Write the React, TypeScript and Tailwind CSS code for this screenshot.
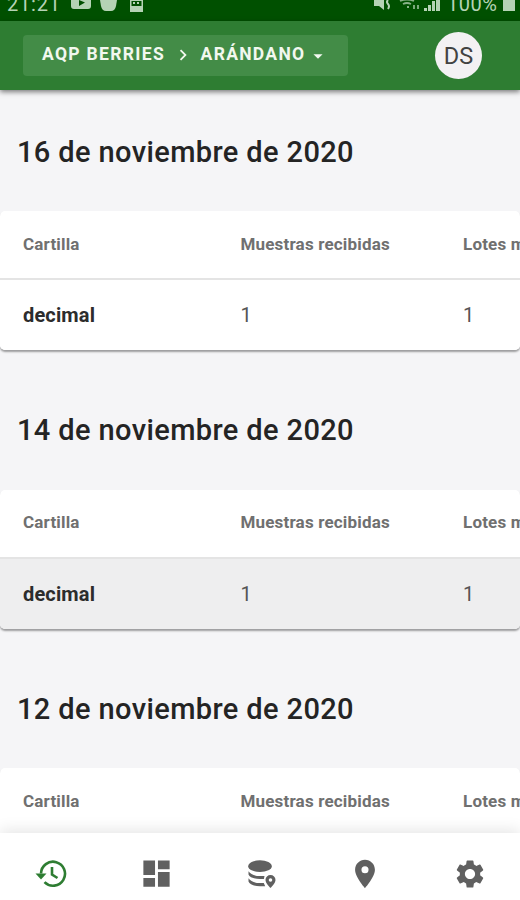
import React, { useState } from 'react';
import { MdDashboard, MdPlace, MdSettings, MdChevronRight, MdArrowDropDown } from 'react-icons/md';

interface CartillaRow {
  name: string;
  samples: number;
  lots: number;
  highlighted?: boolean;
}

interface HistoryDay {
  date: string;
  rows: CartillaRow[];
}

const HISTORY: HistoryDay[] = [
  { date: '16 de noviembre de 2020', rows: [{ name: 'decimal', samples: 1, lots: 1 }] },
  { date: '14 de noviembre de 2020', rows: [{ name: 'decimal', samples: 1, lots: 1, highlighted: true }] },
  { date: '12 de noviembre de 2020', rows: [{ name: 'decimal', samples: 1, lots: 1 }] },
];

const HistoryIcon: React.FC = () => (
  <svg viewBox="0 0 32 28" className="w-8 h-7 mr-[3px]" fill="none" stroke="currentColor" strokeWidth="2.6">
    <path d="M6 13.5A12 12 0 1 1 9.5 22.2" />
    <path d="M17 7v7.5l5.5 3.5" />
    <path d="M0.5 13.5h11L6 19.5z" fill="currentColor" stroke="none" />
  </svg>
);

const DatabasePinIcon: React.FC = () => (
  <svg viewBox="0 0 28 28" className="w-7 h-7 ml-[3px]" fill="currentColor">
    <ellipse cx="12" cy="6.2" rx="11.8" ry="5.9" />
    <path d="M0.5 11.3C2.5 14.5 7 16 12 16h4.500l-.6 3H12C6 19 1.500 17.300 0.500 14.500z" />
    <path d="M0.5 18.3C2.5 21.5 7 23 12 23h3.800l1.400 3.200H12C6 26.200 1.500 24.300 0.500 21.500z" />
    <path
      fillRule="evenodd"
      d="M22.5 15a5 5 0 0 0-5 5c0 3.400 5 8 5 8s5-4.600 5-8a5 5 0 0 0-5-5zm0 3.200a1.800 1.800 0 1 1 0 3.600 1.800 1.800 0 0 1 0-3.600z"
    />
  </svg>
);

const StatusBar: React.FC = () => (
  <div className="h-[21px] shrink-0 bg-[#005000] text-[#b5d3b5] overflow-hidden flex justify-between pl-[7px] pr-[5px]">
    <div className="flex">
      <span className="w-[52px] text-[20px] leading-[22px] -mt-[7px] tracking-[0.8px]">21:21</span>
      <svg viewBox="0 0 73 14" className="w-[73px] h-3.5 ml-3" fill="currentColor">
        <path fillRule="evenodd" d="M0 0h20v6q0 3-3 3H3Q0 9 0 6zm8 0v6l6-3.5z" />
        <path d="M29 0h17l-1 6q-1 5-5 5h-5q-4 0-5-5z" />
        <path fillRule="evenodd" d="M59 0h13v12H59zm1.5 1v5h10V1zM62 2h2v2h-2zm4 0h2v2h-2z" />
      </svg>
    </div>
    <div className="flex">
      <svg viewBox="0 0 68 14" className="w-[68px] h-3.5" fill="currentColor">
        <path d="M0 0h10v10L5 6H0z" />
        <path d="M14 0q-2 2 0 4t0 5" fill="none" stroke="currentColor" strokeWidth="2" />
        <path d="M26 1q7-3 14 0M29 4q4-2 8 0M33 7h2M40 5v4M44 5v4" fill="none" stroke="currentColor" strokeWidth="1.8" opacity="0.75" />
        <path d="M50 8h3v3h-3zM54 5h3v6h-3zM58 1h3v10h-3zM62 0h4v11h-4z" />
      </svg>
      <span className="ml-[5px] w-[52px] text-[20px] leading-[22px] -mt-[7px] tracking-[0.5px]">100%</span>
      <div className="w-3 h-[11px] ml-1 bg-current" />
    </div>
  </div>
);

const Header: React.FC = () => (
  <header className="relative z-10 h-[69px] shrink-0 bg-[#2e7d32] flex items-center justify-between pl-[23px] pr-[38px] shadow-[0_2px_5px_rgba(0,0,0,0.5)]">
    <button className="h-[41px] w-[325px] pl-[18px] rounded bg-[#438c47] text-[#f2f8ef] flex items-center text-[17.5px] font-bold whitespace-nowrap">
      <span className="w-[125px] tracking-[1.32px] -mt-0.5">AQP BERRIES</span>
      <MdChevronRight className="w-[22px] h-[22px] ml-1.5 mr-[5px] -mt-0.5" />
      <span className="w-[108px] tracking-[1.3px] -mt-0.5">ARÁNDANO</span>
      <MdArrowDropDown className="w-[22px] h-[22px]" />
    </button>
    <div className="w-[47px] h-[47px] rounded-full bg-[#f3f1f3] text-[#424242] text-[23.5px] pt-0.5 flex items-center justify-center">
      DS
    </div>
  </header>
);

const HistoryTable: React.FC<{ rows: CartillaRow[] }> = ({ rows }) => (
  <div className="w-full overflow-hidden rounded-[5px] bg-white shadow-[0_2px_2px_rgba(0,0,0,0.36)]">
    <div className="w-[640px] h-[69px] px-[23px] grid grid-cols-[217.5px_222.5px_1fr] items-center border-b-2 border-[#e4e4e4] text-[17px] font-bold tracking-[0.18px] text-[#707070]">
      <span>Cartilla</span>
      <span>Muestras recibidas</span>
      <span>Lotes muestreados</span>
    </div>
    {rows.map((row) => (
      <div
        key={row.name}
        className={`w-[640px] h-[70px] px-[23px] grid grid-cols-[217.5px_222.5px_1fr] items-center text-[20px] text-[#555] ${row.highlighted ? 'bg-[#eeeeef]' : 'bg-white'}`}
      >
        <span className="font-bold tracking-[0.15px] text-[#2c2c2c]">{row.name}</span>
        <span>{row.samples}</span>
        <span>{row.lots}</span>
      </div>
    ))}
  </div>
);

const TABS = [
  { label: 'Historial', icon: <HistoryIcon /> },
  { label: 'Panel', icon: <MdDashboard className="w-[35px] h-[35px]" /> },
  { label: 'Datos', icon: <DatabasePinIcon /> },
  { label: 'Mapa', icon: <MdPlace className="w-[34px] h-[34px] ml-0.5" /> },
  { label: 'Ajustes', icon: <MdSettings className="w-[34px] h-[34px] ml-[3px]" /> },
];

export default function App() {
  const [activeTab, setActiveTab] = useState(0);

  return (
    <div className="w-[520px] h-[900px] flex flex-col overflow-hidden bg-[#f5f5f7] font-['Roboto',sans-serif]">
      <StatusBar />
      <Header />

      {/* Daily history */}
      <main className="flex-1 min-h-0 overflow-hidden">
        {HISTORY.map((day) => (
          <section key={day.date} className="h-[278.5px]">
            <h2 className="h-[121px] pl-[17px] pt-1 flex items-center text-[29px] font-medium tracking-[0.38px] text-[#242424]">
              {day.date}
            </h2>
            <HistoryTable rows={day.rows} />
          </section>
        ))}
      </main>

      {/* Bottom navigation */}
      <nav className="relative z-10 h-[67px] shrink-0 bg-white grid grid-cols-5 pt-[14px] pl-px shadow-[0_-3px_14px_rgba(0,0,0,0.1)]">
        {TABS.map((tab, index) => (
          <button
            key={tab.label}
            aria-label={tab.label}
            onClick={() => setActiveTab(index)}
            className={`flex items-center justify-center h-[53px] ${activeTab === index ? 'text-[#2e7d32]' : 'text-[#606060]'}`}
          >
            {tab.icon}
          </button>
        ))}
      </nav>
    </div>
  );
}
